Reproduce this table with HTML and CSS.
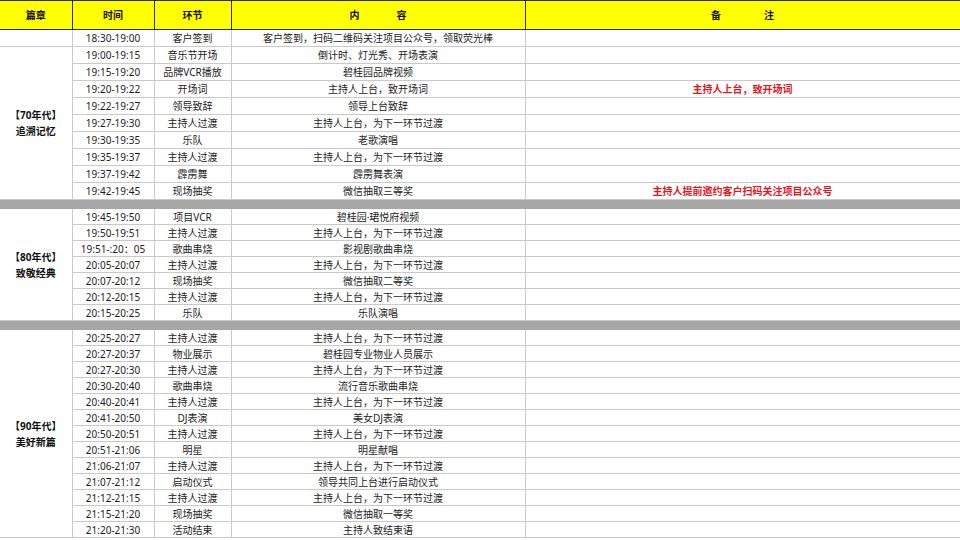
FILE: index.html
```html
<!DOCTYPE html>
<html lang="zh">
<head>
<meta charset="utf-8">
<title>活动流程</title>
<link rel="stylesheet" href="styles.css">
</head>
<body>
<table class="sched">
  <colgroup>
    <col class="c1"><col class="c2"><col class="c3"><col class="c4"><col class="c5">
  </colgroup>
  <thead>
    <tr>
      <th>篇章</th>
      <th>时间</th>
      <th>环节</th>
      <th>内<span class="gap4"></span>容</th>
      <th>备<span class="gap5"></span>注</th>
    </tr>
  </thead>
  <tbody>
    <tr class="a"><td></td><td>18:30-19:00</td><td>客户签到</td><td>客户签到，扫码二维码关注项目公众号，领取荧光棒</td><td></td></tr>

    <tr class="a"><td rowspan="9" class="era">【70年代】<br>追溯记忆</td><td>19:00-19:15</td><td>音乐节开场</td><td>倒计时、灯光秀、开场表演</td><td></td></tr>
    <tr class="a"><td>19:15-19:20</td><td>品牌VCR播放</td><td>碧桂园品牌视频</td><td></td></tr>
    <tr class="a"><td>19:20-19:22</td><td>开场词</td><td>主持人上台，致开场词</td><td class="note">主持人上台，致开场词</td></tr>
    <tr class="a"><td>19:22-19:27</td><td>领导致辞</td><td>领导上台致辞</td><td></td></tr>
    <tr class="a"><td>19:27-19:30</td><td>主持人过渡</td><td>主持人上台，为下一环节过渡</td><td></td></tr>
    <tr class="a"><td>19:30-19:35</td><td>乐队</td><td>老歌演唱</td><td></td></tr>
    <tr class="a"><td>19:35-19:37</td><td>主持人过渡</td><td>主持人上台，为下一环节过渡</td><td></td></tr>
    <tr class="a"><td>19:37-19:42</td><td>霹雳舞</td><td>霹雳舞表演</td><td></td></tr>
    <tr class="a"><td>19:42-19:45</td><td>现场抽奖</td><td>微信抽取三等奖</td><td class="note">主持人提前邀约客户扫码关注项目公众号</td></tr>

    <tr class="sep"><td colspan="5"></td></tr>

    <tr class="b"><td rowspan="7" class="era">【80年代】<br>致敬经典</td><td>19:45-19:50</td><td>项目VCR</td><td>碧桂园·珺悦府视频</td><td></td></tr>
    <tr class="b"><td>19:50-19:51</td><td>主持人过渡</td><td>主持人上台，为下一环节过渡</td><td></td></tr>
    <tr class="b"><td>19:51-:20：05</td><td>歌曲串烧</td><td>影视剧歌曲串烧</td><td></td></tr>
    <tr class="b"><td>20:05-20:07</td><td>主持人过渡</td><td>主持人上台，为下一环节过渡</td><td></td></tr>
    <tr class="b"><td>20:07-20:12</td><td>现场抽奖</td><td>微信抽取二等奖</td><td></td></tr>
    <tr class="b"><td>20:12-20:15</td><td>主持人过渡</td><td>主持人上台，为下一环节过渡</td><td></td></tr>
    <tr class="b"><td>20:15-20:25</td><td>乐队</td><td>乐队演唱</td><td></td></tr>

    <tr class="sep"><td colspan="5"></td></tr>

    <tr class="b"><td rowspan="13" class="era">【90年代】<br>美好新篇</td><td>20:25-20:27</td><td>主持人过渡</td><td>主持人上台，为下一环节过渡</td><td></td></tr>
    <tr class="b"><td>20:27-20:37</td><td>物业展示</td><td>碧桂园专业物业人员展示</td><td></td></tr>
    <tr class="b"><td>20:27-20:30</td><td>主持人过渡</td><td>主持人上台，为下一环节过渡</td><td></td></tr>
    <tr class="b"><td>20:30-20:40</td><td>歌曲串烧</td><td>流行音乐歌曲串烧</td><td></td></tr>
    <tr class="b"><td>20:40-20:41</td><td>主持人过渡</td><td>主持人上台，为下一环节过渡</td><td></td></tr>
    <tr class="b"><td>20:41-20:50</td><td>DJ表演</td><td>美女DJ表演</td><td></td></tr>
    <tr class="b"><td>20:50-20:51</td><td>主持人过渡</td><td>主持人上台，为下一环节过渡</td><td></td></tr>
    <tr class="b"><td>20:51-21:06</td><td>明星</td><td>明星献唱</td><td></td></tr>
    <tr class="b"><td>21:06-21:07</td><td>主持人过渡</td><td>主持人上台，为下一环节过渡</td><td></td></tr>
    <tr class="b"><td>21:07-21:12</td><td>启动仪式</td><td>领导共同上台进行启动仪式</td><td></td></tr>
    <tr class="b"><td>21:12-21:15</td><td>主持人过渡</td><td>主持人上台，为下一环节过渡</td><td></td></tr>
    <tr class="b"><td>21:15-21:20</td><td>现场抽奖</td><td>微信抽取一等奖</td><td></td></tr>
    <tr class="b"><td>21:20-21:30</td><td>活动结束</td><td>主持人致结束语</td><td></td></tr>
  </tbody>
</table>
</body>
</html>
```
FILE: styles.css
```css
html, body {
  margin: 0;
  padding: 0;
  background: #ffffff;
  overflow: hidden;
}
body {
  font-family: "Noto Sans", "Noto Sans CJK SC", sans-serif;
  font-size: 10px;
  color: #1c1c1c;
}
.sched {
  width: 960px;
  border-collapse: collapse;
  table-layout: fixed;
}
.c1 { width: 72px; }
.c2 { width: 82px; }
.c3 { width: 77px; }
.c4 { width: 294px; }
.c5 { width: 435px; }

.sched th {
  background: #ffff00;
  height: 28px;
  padding: 0;
  border: 1px solid #2b2b2b;
  border-left: none;
  font-weight: bold;
  font-size: 10px;
  line-height: 12px;
  color: #111;
  text-align: center;
}
.gap4 { display: inline-block; width: 37px; }
.gap5 { display: inline-block; width: 43px; }

.sched td {
  padding: 0;
  border: 1px solid #c9c9c9;
  border-left: none;
  text-align: center;
  vertical-align: middle;
  line-height: 12px;
  white-space: nowrap;
  overflow: hidden;
}
.sched tr.a td { height: 16px; }
.sched tr.b td { height: 15px; }
.sched tr.sep td {
  height: 8px;
  background: #a6a6a6;
  border-color: #a6a6a6;
}
.sched td.era {
  font-weight: bold;
  line-height: 16px;
  color: #111;
}
.sched td.note {
  color: #e8141c;
  font-weight: bold;
}
```
